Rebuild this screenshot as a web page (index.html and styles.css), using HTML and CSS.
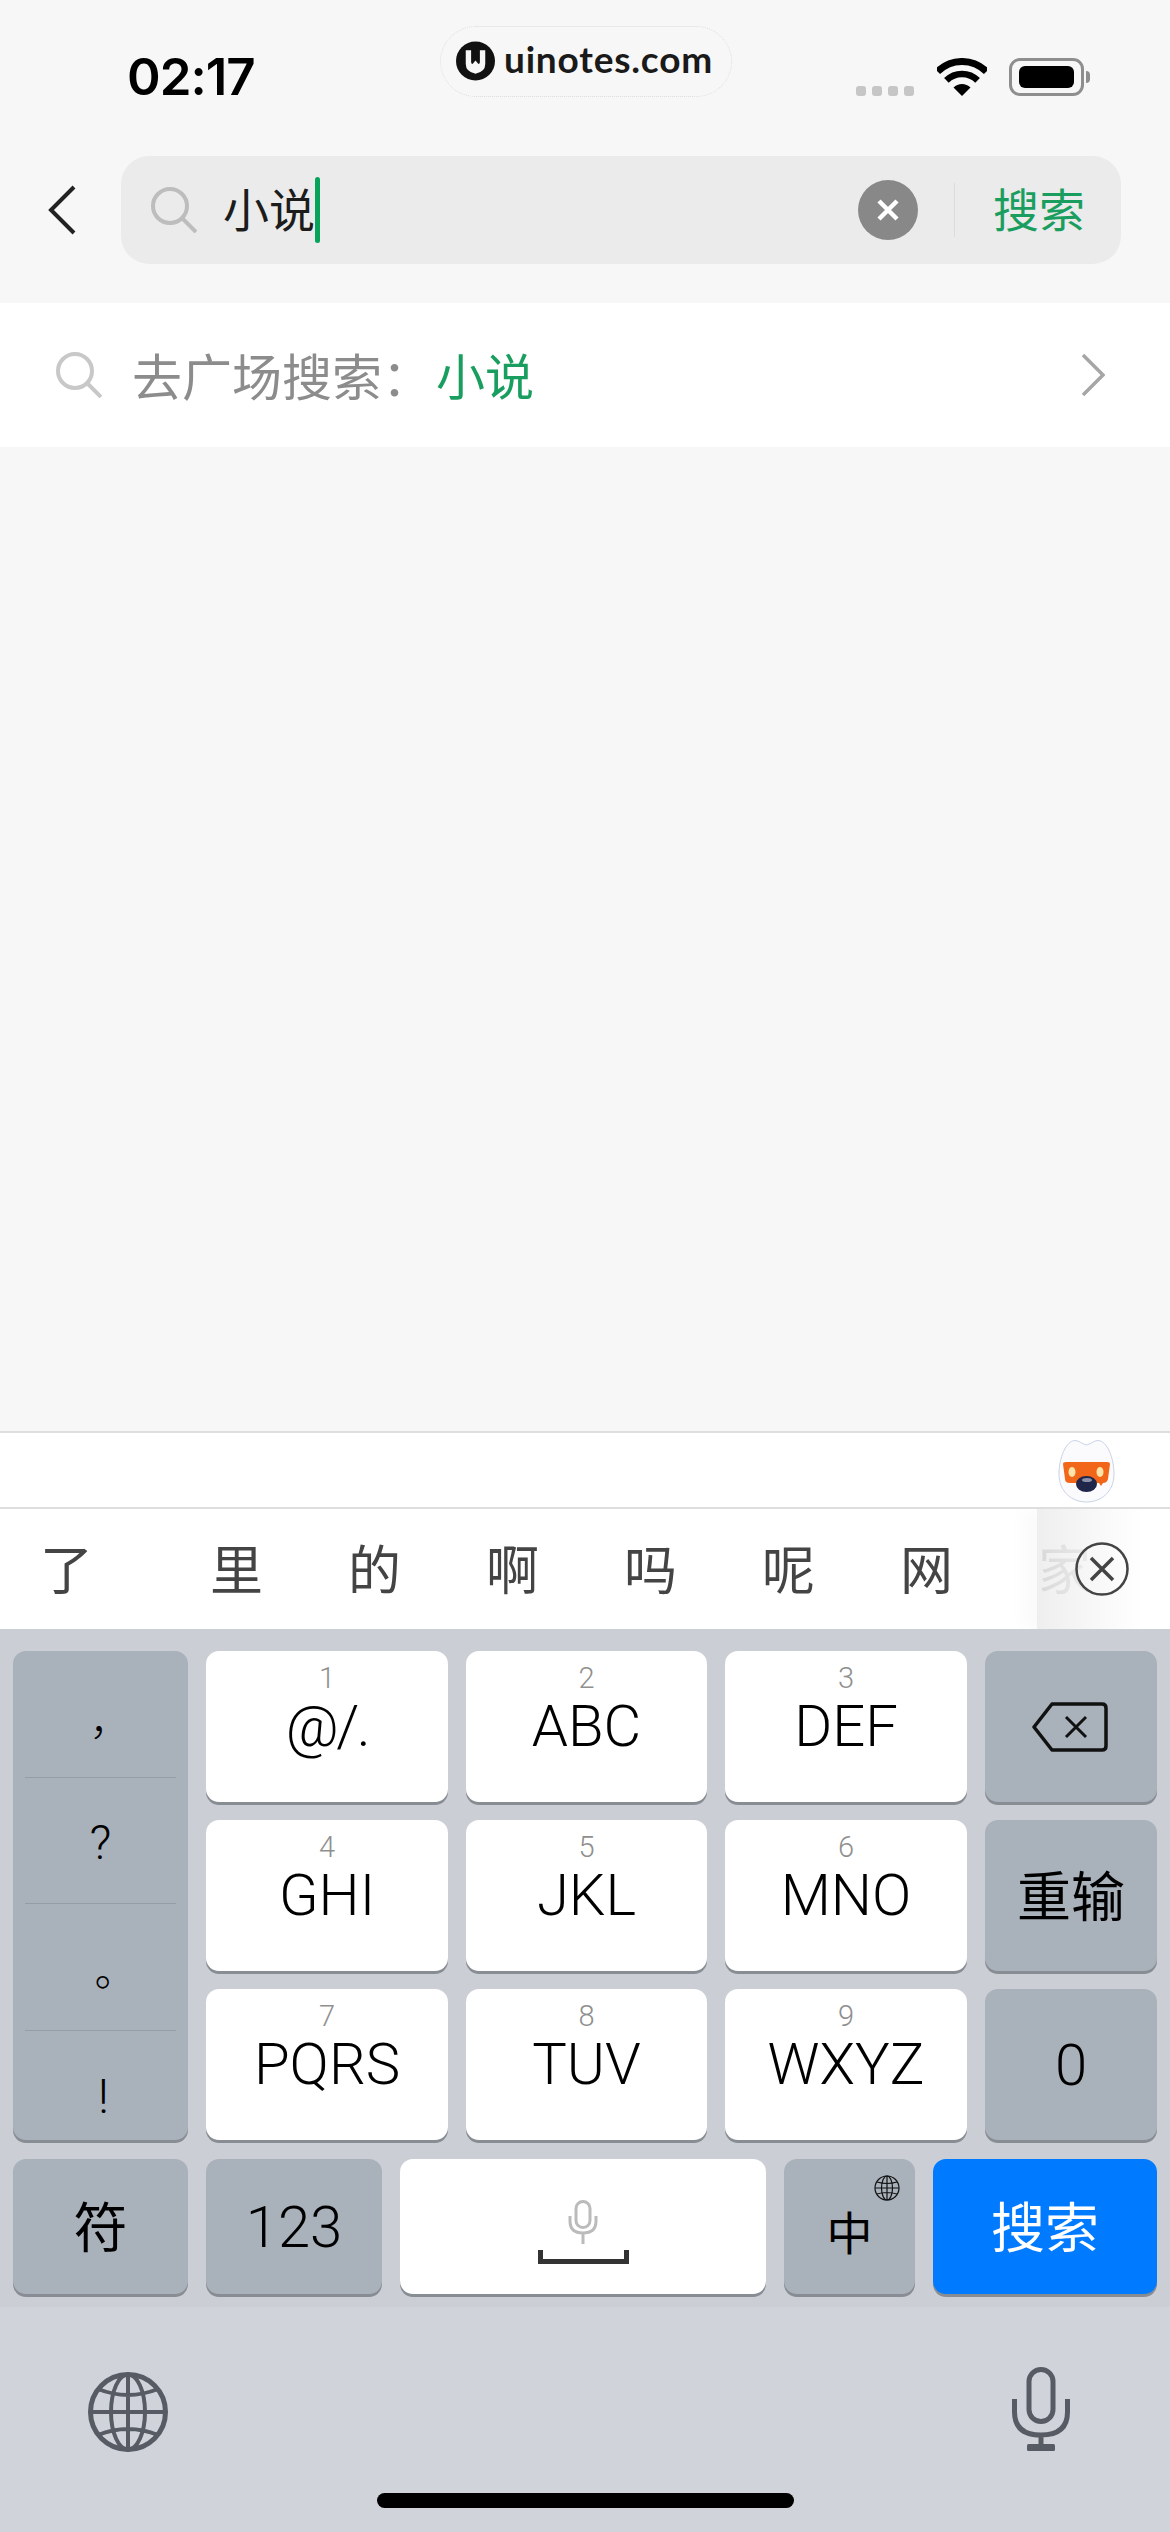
FILE: index.html
```html
<!DOCTYPE html>
<html lang="zh-CN">
<head>
    <meta charset="UTF-8">
    <meta name="viewport" content="width=device-width, initial-scale=1.0">
    <title>搜索</title>
    <link rel="stylesheet" href="styles.css">
</head>
<body>
    <div class="phone">
        <div class="status">
            <span class="time">02:17</span>
            <div class="brand">
                <svg class="brandLogo" viewBox="0 0 40 40">
                    <circle cx="20" cy="20" r="20" fill="#111"/>
                    <path d="M10 9h5.500v12q0 2 1.500 2l3-3.500 3 3.500q1.500 0 1.500-2V9H30v14q0 8-10 10-10-2-10-10z" fill="#f7f7f7"/>
                </svg>
                <span class="brandName">uinotes.com</span>
            </div>
            <div class="signal"><i></i><i></i><i></i><i></i></div>
            <svg class="wifi" viewBox="0 0 50 38">
                <path d="M0.600 13.600A34.500 34.500 0 0 1 49.400 13.600" fill="none" stroke="#000" stroke-width="7"/>
                <path d="M9.400 22.400A22 22 0 0 1 40.600 22.400" fill="none" stroke="#000" stroke-width="6.500"/>
                <path d="M25 38L16.500 29.500A12 12 0 0 1 33.500 29.500z" fill="#000"/>
            </svg>
            <div class="battery"><div class="batteryFill"></div></div>
            <div class="batteryNub"></div>
        </div>

        <div class="searchHead">
            <svg class="back" viewBox="0 0 28 50">
                <path d="M26 2L3 25l23 23" fill="none" stroke="#222" stroke-width="4"/>
            </svg>
            <div class="searchBar">
                <svg class="lens" viewBox="0 0 46 46">
                    <circle cx="19" cy="19" r="17" fill="none" stroke="#bdbdbd" stroke-width="4"/>
                    <path d="M31 31l14 14" fill="none" stroke="#bdbdbd" stroke-width="4"/>
                </svg>
                <span class="query">小说</span><span class="cursor"></span>
                <div class="clear">
                    <svg viewBox="0 0 24 24"><path d="M3 3l18 18M21 3L3 21" stroke="#fff" stroke-width="4.500"/></svg>
                </div>
                <div class="barDivider"></div>
                <span class="searchLink">搜索</span>
            </div>
        </div>

        <div class="squareRow">
            <svg class="lens" viewBox="0 0 46 46">
                <circle cx="19" cy="19" r="17" fill="none" stroke="#c8c8c8" stroke-width="4"/>
                <path d="M31 31l14 14" fill="none" stroke="#c8c8c8" stroke-width="4"/>
            </svg>
            <span class="squareLabel">去广场搜索：</span><span class="squareWord">小说</span>
            <svg class="chevron" viewBox="0 0 24 44">
                <path d="M2 2l20 20L2 42" fill="none" stroke="#a6a6a6" stroke-width="3.500"/>
            </svg>
        </div>

        <div class="blank"></div>

        <div class="toolbar">
            <svg class="mascot" viewBox="0 0 57 63">
                <path d="M28.500 5C24 4 21 .5 17 .5 8 .5 1 18 1 34c0 18 13 28 27.500 28S56 52 56 34C56 18 49 .5 40 .5 36 .5 33 4 28.500 5z" fill="#fbfbfd" stroke="#c9d3e6" stroke-width="1"/>
                <path d="M5 24q0-2 3-2h41q3 0 3 2l-2 15q-1 4-5 4l-2 3-2-3H12q-5 0-5-4z" fill="#f2661a"/>
                <ellipse cx="14" cy="32" rx="3.500" ry="5" fill="#ffe3a8"/>
                <ellipse cx="42" cy="32" rx="3.500" ry="5" fill="#ffe3a8"/>
                <ellipse cx="28.500" cy="44" rx="10.500" ry="8" fill="#20264a"/>
                <ellipse cx="29" cy="40" rx="5" ry="2" fill="#8b90a8"/>
            </svg>
        </div>

        <div class="candidates">
            <span class="cand first">了</span>
            <span class="cand">里</span>
            <span class="cand">的</span>
            <span class="cand">啊</span>
            <span class="cand">吗</span>
            <span class="cand">呢</span>
            <span class="cand">网</span>
            <span class="cand">家</span>
            <div class="candFade">
                <svg viewBox="0 0 54 54">
                    <circle cx="27" cy="27" r="25.500" fill="none" stroke="#444" stroke-width="2.500"/>
                    <path d="M16 16l22 22M38 16L16 38" stroke="#444" stroke-width="3.500"/>
                </svg>
            </div>
        </div>

        <div class="keyboard">
            <div class="keyGrid">
                <div class="key gray punct">
                    <span class="punctCell comma">，</span>
                    <span class="punctCell ask">?</span>
                    <span class="punctCell stop">。</span>
                    <span class="punctCell bang">!</span>
                </div>
                <div class="key letter"><small>1</small><b class="tight">@/.</b></div>
                <div class="key letter"><small>2</small><b>ABC</b></div>
                <div class="key letter"><small>3</small><b>DEF</b></div>
                <div class="key gray center">
                    <svg class="backspace" viewBox="0 0 76 50">
                        <path d="M20 2h50q4 0 4 4v38q0 4-4 4H20L2 25z" fill="none" stroke="#111" stroke-width="3.500" stroke-linejoin="round"/>
                        <path d="M34 15l20 20M54 15L34 35" stroke="#111" stroke-width="3"/>
                    </svg>
                </div>
                <div class="key letter"><small>4</small><b>GHI</b></div>
                <div class="key letter"><small>5</small><b>JKL</b></div>
                <div class="key letter"><small>6</small><b>MNO</b></div>
                <div class="key gray center cjk">重输</div>
                <div class="key letter"><small>7</small><b>PQRS</b></div>
                <div class="key letter"><small>8</small><b>TUV</b></div>
                <div class="key letter"><small>9</small><b>WXYZ</b></div>
                <div class="key gray center latin">0</div>
            </div>
            <div class="keyRow">
                <div class="key gray center cjk w175">符</div>
                <div class="key gray center latin w176">123</div>
                <div class="key center spaceKey">
                    <svg class="spaceMic" viewBox="0 0 30 44">
                        <rect x="8" y="1.500" width="14" height="26" rx="7" fill="none" stroke="#bbb" stroke-width="3"/>
                        <path d="M2 16v5q0 12 13 12t13-12v-5M15 33v11" fill="none" stroke="#bbb" stroke-width="3"/>
                    </svg>
                    <svg class="spaceBar" viewBox="0 0 91 14">
                        <path d="M2.500 0v11.500h86V0" fill="none" stroke="#333" stroke-width="5"/>
                    </svg>
                </div>
                <div class="key gray center cjk w131 zhKey">
                    中
                    <svg class="zhGlobe" viewBox="0 0 26 26">
                        <circle cx="13" cy="13" r="12" fill="none" stroke="#111" stroke-width="1.200"/>
                        <ellipse cx="13" cy="13" rx="5.500" ry="12" fill="none" stroke="#111" stroke-width="1.200"/>
                        <path d="M13 1v24M1 13h24M3 7q10 3 20 0M3 19q10-3 20 0" fill="none" stroke="#111" stroke-width="1.200"/>
                    </svg>
                </div>
                <div class="key center blue cjk w224">搜索</div>
            </div>
        </div>

        <div class="deviceBar">
            <div class="deviceIcons">
                <svg class="bigGlobe" viewBox="0 0 80 80">
                    <circle cx="40" cy="40" r="37.500" fill="none" stroke="#565b64" stroke-width="5"/>
                    <ellipse cx="40" cy="40" rx="17" ry="37.500" fill="none" stroke="#565b64" stroke-width="4"/>
                    <path d="M40 3v74M3 40h74M10 17q30 12 60 0M10 63q30-12 60 0" fill="none" stroke="#565b64" stroke-width="4"/>
                </svg>
                <svg class="bigMic" viewBox="0 0 58 84">
                    <rect x="17" y="2.500" width="24" height="52" rx="12" fill="none" stroke="#565b64" stroke-width="5"/>
                    <path d="M2.500 32v13q0 23 26.500 23t26.500-23V32M29 68v12" fill="none" stroke="#565b64" stroke-width="5"/>
                    <rect x="15" y="77" width="28" height="7" rx="1.500" fill="#565b64"/>
                </svg>
            </div>
            <div class="homeBar"></div>
        </div>
    </div>
</body>
</html>
```
FILE: styles.css
```css
* {
    box-sizing: border-box;
}

body {
    margin: 0;
    background-color: #f7f7f7;
    font-family: "Noto Sans CJK SC", "Liberation Sans", sans-serif;
}

svg {
    display: block;
    flex-shrink: 0;
}

.phone {
    width: 1170px;
    height: 2532px;
    display: flex;
    flex-direction: column;
    overflow: hidden;
}

/* Barra de status */
.status {
    height: 130px;
    flex: none;
    display: flex;
    align-items: flex-start;
    padding-left: 127px;
}

.time {
    width: 128px;
    margin-top: 47px;
    font-family: Inter, sans-serif;
    font-size: 51px;
    line-height: 60px;
    font-weight: 600;
    letter-spacing: -1px;
    color: #000;
    white-space: nowrap;
}

.brand {
    width: 292px;
    height: 71px;
    margin-top: 26px;
    margin-left: 185px;
    padding-left: 15px;
    display: flex;
    align-items: center;
    gap: 9px;
    border: 1px dotted #dcdcdc;
    border-radius: 36px;
}

.brandLogo {
    width: 39px;
    height: 40px;
    margin-top: -1px;
}

.brandName {
    font-family: Lato, sans-serif;
    font-size: 37px;
    line-height: 44px;
    font-weight: 700;
    letter-spacing: 0.8px;
    color: #1a1a1a;
    margin-top: -6px;
}

.signal {
    display: flex;
    gap: 6px;
    margin-top: 86px;
    margin-left: 124px;
}

.signal i {
    width: 10px;
    height: 10px;
    border-radius: 3px;
    background-color: #c6c6c6;
}

.wifi {
    width: 50px;
    height: 38px;
    margin-top: 58px;
    margin-left: 23px;
}

.battery {
    width: 75px;
    height: 38px;
    margin-top: 58px;
    margin-left: 22px;
    padding: 5px 7px;
    border: 3px solid #8e8e8e;
    border-radius: 11px;
}

.batteryFill {
    height: 100%;
    background-color: #000;
    border-radius: 6px;
}

.batteryNub {
    width: 4px;
    height: 12px;
    margin-top: 71px;
    margin-left: 2px;
    background-color: #8e8e8e;
    border-radius: 0 6px 6px 0;
}

/* Cabecalho de busca */
.searchHead {
    height: 173px;
    flex: none;
    padding: 26px 49px 0 48px;
    display: flex;
    align-items: flex-start;
}

.back {
    width: 28px;
    height: 50px;
    margin-top: 29px;
    margin-right: 45px;
}

.searchBar {
    flex: 1;
    height: 108px;
    padding-left: 30px;
    display: flex;
    align-items: center;
    background-color: #ebebeb;
    border-radius: 28px;
}

.lens {
    width: 46px;
    height: 46px;
}

.query {
    margin-left: 26px;
    margin-top: -6px;
    font-size: 46px;
    line-height: 60px;
    color: #1c1c1c;
}

.cursor {
    width: 5px;
    height: 66px;
    background-color: #07a35a;
    border-radius: 3px;
}

.clear {
    width: 60px;
    height: 60px;
    margin-left: 538px;
    display: flex;
    align-items: center;
    justify-content: center;
    background-color: #888;
    border-radius: 50%;
}

.clear svg {
    width: 24px;
    height: 24px;
}

.barDivider {
    width: 1px;
    height: 54px;
    margin-left: 36px;
    background-color: #dcdcdc;
}

.searchLink {
    margin-left: 38px;
    margin-top: -6px;
    font-size: 46px;
    line-height: 60px;
    color: #1a9e5f;
}

/* Linha "ir para a praca" */
.squareRow {
    height: 144px;
    flex: none;
    padding-left: 56px;
    display: flex;
    align-items: center;
    background-color: #fff;
}

.squareLabel {
    width: 304px;
    margin-left: 30px;
    margin-top: -3px;
    font-size: 50px;
    line-height: 60px;
    color: #8c8c8c;
    white-space: nowrap;
}

.squareWord {
    margin-top: -3px;
    font-size: 49px;
    line-height: 60px;
    color: #1a9e5f;
}

.chevron {
    width: 24px;
    height: 44px;
    margin-left: auto;
    margin-right: 65px;
}

.blank {
    flex: 1;
}

/* Barra acima do teclado */
.toolbar {
    height: 78px;
    flex: none;
    padding-right: 55px;
    display: flex;
    justify-content: flex-end;
    align-items: flex-start;
    background-color: #fff;
    border-top: 2px solid #dedede;
    border-bottom: 2px solid #dedede;
}

.mascot {
    width: 57px;
    height: 63px;
    margin-top: 7px;
}

.candidates {
    position: relative;
    height: 120px;
    flex: none;
    padding: 0 0 5px 40px;
    display: flex;
    align-items: center;
    gap: 85px;
    background-color: #fff;
    overflow: hidden;
}

.cand {
    font-size: 53px;
    line-height: 60px;
    color: #444;
    white-space: nowrap;
}

.cand.first {
    margin-right: 32px;
}

.candFade {
    position: absolute;
    top: 0;
    right: 0;
    bottom: 0;
    width: 133px;
    padding-left: 38px;
    display: flex;
    align-items: center;
    background: linear-gradient(to right, rgba(236, 236, 236, 0.88), rgba(250, 250, 250, 0.96) 55%, #fff 80%);
    box-shadow: -14px 0 16px rgba(0, 0, 0, 0.025);
}

.candFade svg {
    width: 54px;
    height: 54px;
}

/* Teclado */
.keyboard {
    height: 678px;
    flex: none;
    padding: 22px 13px 0;
    background-color: #cbcfd5;
}

.keyGrid {
    display: grid;
    grid-template-columns: 175px 242px 241px 242px 172px;
    grid-auto-rows: 151px;
    gap: 18px;
}

.keyRow {
    display: flex;
    gap: 18px;
    margin-top: 19px;
    height: 135px;
}

.key {
    position: relative;
    background-color: #fff;
    border-radius: 13px;
    box-shadow: 0 3px 0 #888d93;
    color: #000;
}

.key.gray {
    background-color: #a9b1ba;
}

.key.blue {
    background-color: #007aff;
    color: #fff;
}

.key.center {
    display: flex;
    align-items: center;
    justify-content: center;
}

.letter {
    padding-top: 11px;
    display: flex;
    flex-direction: column;
    align-items: center;
    font-family: Roboto, sans-serif;
}

.letter small {
    font-size: 29px;
    line-height: 32px;
    font-weight: 300;
    color: #8f8f8f;
}

.letter b {
    font-size: 58px;
    line-height: 64px;
    font-weight: 300;
}

.letter b.tight {
    letter-spacing: -2.500px;
}

.cjk {
    padding-bottom: 4px;
    font-size: 54px;
    line-height: 64px;
}

.latin {
    font-family: Roboto, sans-serif;
    font-size: 58px;
    font-weight: 300;
}

.punct {
    grid-row: span 3;
    padding: 0 12px;
    display: flex;
    flex-direction: column;
    font-family: Roboto, sans-serif;
    font-size: 48px;
    font-weight: 300;
}

.punctCell {
    height: 127px;
    display: flex;
    justify-content: center;
    border-bottom: 1px solid #949ca5;
    line-height: 60px;
}

.punctCell.comma {
    padding-top: 36px;
    font-family: "Noto Sans CJK SC", sans-serif;
    font-size: 42px;
    padding-left: 20px;
}

.punctCell.ask {
    padding-top: 35px;
}

.punctCell.stop {
    padding-top: 34px;
    padding-left: 30px;
    font-family: "Noto Sans CJK SC", sans-serif;
    font-size: 42px;
}

.punctCell.bang {
    height: 109px;
    padding-top: 36px;
    padding-left: 6px;
    border-bottom: 0;
}

.backspace {
    width: 76px;
    height: 50px;
    margin-left: -2px;
}

.w175 {
    width: 175px;
}

.w176 {
    width: 176px;
}

.w131 {
    width: 131px;
}

.w224 {
    width: 224px;
}

.spaceKey {
    width: 366px;
    flex-direction: column;
    gap: 6px;
    padding-top: 10px;
}

.spaceMic {
    width: 30px;
    height: 44px;
}

.spaceBar {
    width: 91px;
    height: 14px;
}

.zhKey {
    padding-top: 6px;
    padding-bottom: 0;
    font-size: 46px;
}

.zhGlobe {
    position: absolute;
    top: 16px;
    right: 15px;
    width: 26px;
    height: 26px;
}

/* Parte de baixo */
.deviceBar {
    height: 225px;
    flex: none;
    background-color: #d0d4da;
}

.deviceIcons {
    padding: 65px 100px 0 88px;
    display: flex;
    justify-content: space-between;
    align-items: flex-start;
}

.bigGlobe {
    width: 80px;
    height: 80px;
}

.bigMic {
    width: 58px;
    height: 84px;
    margin-top: -5px;
}

.homeBar {
    width: 417px;
    height: 15px;
    margin: 41px 0 0 377px;
    background-color: #000;
    border-radius: 8px;
}
```
